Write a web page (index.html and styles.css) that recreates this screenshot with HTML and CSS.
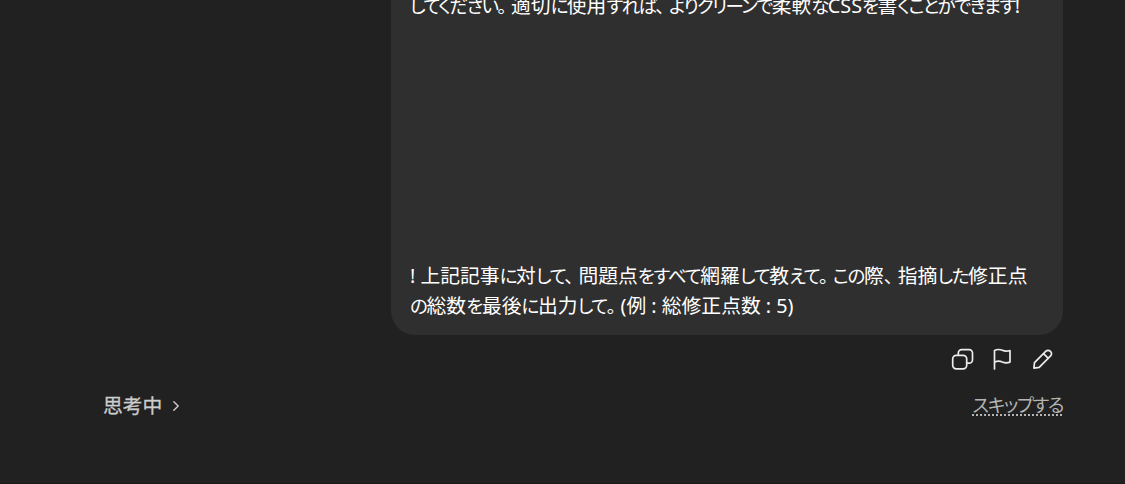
FILE: index.html
```html
<!DOCTYPE html>
<html lang="ja">
<head>
    <meta charset="UTF-8">
    <meta name="viewport" content="width=device-width, initial-scale=1.0">
    <title>チャット</title>
    <link rel="stylesheet" href="styles.css">
</head>
<body>
    <main class="thread">
        <div class="message">
            <p class="line line-end"><span class="kana">してください<span class="stop">。</span></span>適切<span class="kana">に</span>使用<span class="kana">すれば<span class="stop">、</span></span><span class="kana">よりクリーンで</span>柔軟<span class="kana">な</span>CSS<span class="kana">を</span>書<span class="kana">くことができます</span>!</p>
            <p class="line line-ask">! 上記記事<span class="kana">に</span>対<span class="kana">して<span class="stop">、</span></span>問題点<span class="kana">をすべて</span>網羅<span class="kana">して</span>教<span class="kana">えて<span class="stop">。</span>この</span>際<span class="kana"><span class="stop">、</span></span>指摘<span class="kana">した</span>修正点</p>
            <p class="line line-total"><span class="kana">の</span>総数<span class="kana">を</span>最後<span class="kana">に</span>出力<span class="kana">して<span class="stop">。</span></span>(例 : 総修正点数 : 5)</p>
        </div>

        <div class="actions">
            <button class="icon-btn" aria-label="コピー">
                <svg viewBox="0 0 24 24"><rect x="2.7" y="8.300" width="14" height="13.600" rx="3.6"/><path d="M8.300 8V6a3.400 3.400 0 0 1 3.400-3.400h7.400A3.400 3.400 0 0 1 22.500 6v6.800a3.400 3.400 0 0 1-3.400 3.400h-2.200"/></svg>
            </button>
            <button class="icon-btn" aria-label="報告">
                <svg viewBox="0 0 24 24"><path d="M4.500 22V3.600c3-1.600 5.200-1.400 7.800-.3 2.600 1.100 4.800 1.100 7.700.2v11.600c-2.900 1-5.100 1-7.700-.1-2.600-1.200-4.800-1.200-7.800.2"/></svg>
            </button>
            <button class="icon-btn" aria-label="編集">
                <svg viewBox="0 0 24 24"><path d="M3.900 21.200l.6-5.600L15.900 4.200a3 3 0 0 1 4.300 0l.4.4a3 3 0 0 1 0 4.300L9.200 20.300zM13.600 6.600l4.700 4.700"/></svg>
            </button>
        </div>

        <div class="status">
            <div class="thinking">
                <span>思考中</span>
                <svg class="chevron" viewBox="0 0 12 12"><path d="M3.800 1.700L8.200 6l-4.400 4.300"/></svg>
            </div>
            <a class="skip"><span class="kana">スキップする</span></a>
        </div>
    </main>
</body>
</html>
```
FILE: styles.css
```css
* {
    box-sizing: border-box;
}

body {
    margin: 0;
    height: 484px;
    overflow: hidden;
    background: #212121;
    color: #fff;
    font-family: "Noto Sans", "Noto Sans CJK JP", sans-serif;
    font-size: 19.8px;
    line-height: 30px;
    font-feature-settings: "palt";
    border-bottom: 1px solid #1c181b;
}

.thread {
    width: 960px;
    margin-left: 103px;
}

.message {
    display: flex;
    flex-direction: column;
    width: 672px;
    height: 335px;
    margin-left: auto;
    padding: 0 20px 14px 19px;
    overflow: hidden;
    background: #2f2f2f;
    border-radius: 0 0 24px 24px;
}

.line {
    margin: 0;
    flex: none;
    white-space: nowrap;
}

.line-end {
    margin-top: -9px;
    margin-bottom: auto;
}

.kana {
    font-size: 18.5px;
    letter-spacing: -1.3px;
}

.line-end .kana {
    letter-spacing: -1.6px;
}

.stop {
    margin-right: 6px;
}

.actions {
    display: flex;
    justify-content: flex-end;
    gap: 16px;
    padding: 12px 9px 0 0;
}

.icon-btn {
    width: 24px;
    height: 24px;
    padding: 0;
    border: none;
    background: none;
    color: #ececec;
}

.icon-btn svg,
.chevron {
    display: block;
    fill: none;
    stroke: currentColor;
    stroke-width: 1.7;
    stroke-linecap: round;
    stroke-linejoin: round;
}

.status {
    display: flex;
    justify-content: space-between;
    align-items: center;
    margin-top: 20px;
}

.thinking {
    display: flex;
    align-items: center;
    gap: 8px;
    color: #cdcdcd;
    -webkit-text-stroke: 0.3px #cdcdcd;
}

.chevron {
    width: 12px;
    height: 12px;
    stroke-width: 1.4;
}

.skip {
    height: 26px;
    line-height: 24px;
    color: #b4b4b4;
    text-decoration: underline dotted 2px;
    text-underline-offset: 2px;
}

.skip .kana {
    letter-spacing: -1.4px;
}
```
